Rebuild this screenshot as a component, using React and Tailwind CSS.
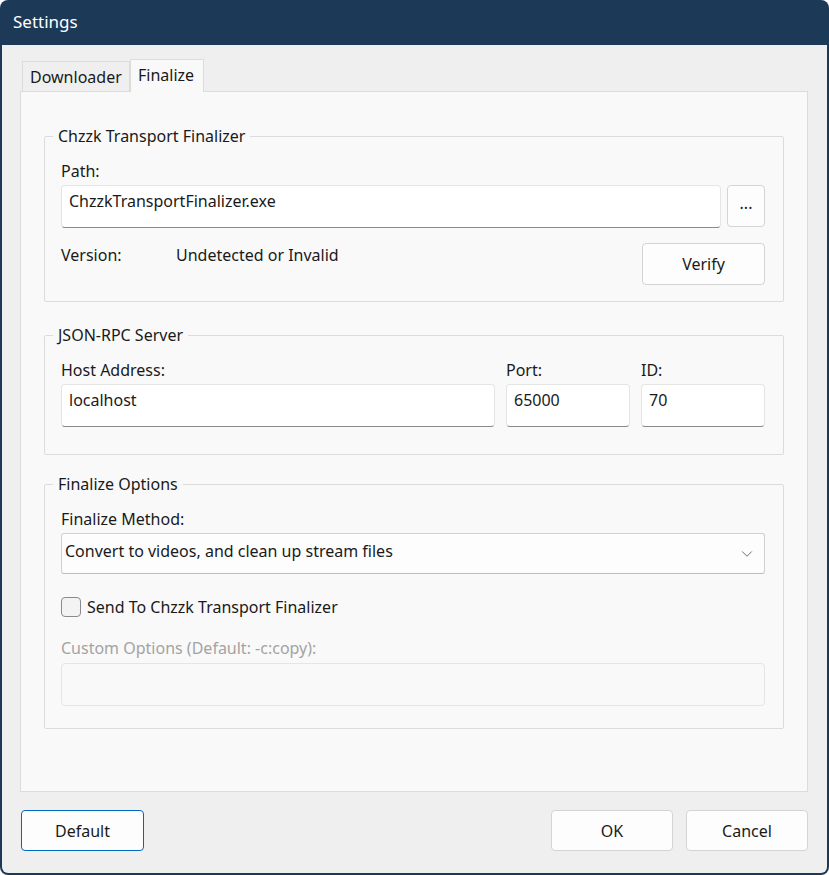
import { ChevronDown } from 'lucide-react';

const FONT = { fontFamily: '"Segoe UI", "Noto Sans", sans-serif' };

function TextBox({ value, className = '', disabled = false }) {
  return (
    <div
      className={`h-[43px] rounded-[4px] border px-[7px] flex items-center ${
        disabled
          ? 'bg-[#f9f9f9] border-[#e5e5e5]'
          : 'bg-white border-[#e5e5e5] border-b-[#8a8a8a]'
      } ${className}`}
    >
      <span className="text-[16px] text-[#1a1a1a] leading-none -mt-[12px]">{value}</span>
    </div>
  );
}

function Button({ children, className = '', primary = false }) {
  return (
    <button
      className={`rounded-[4px] border bg-[#fdfdfd] text-[16px] text-[#1a1a1a] flex items-center justify-center ${
        primary ? 'border-[#0067c0]' : 'border-[#d4d4d4]'
      } ${className}`}
    >
      {children}
    </button>
  );
}

function Group({ title, className = '', children }) {
  return (
    <fieldset className={`border border-[#dcdcdc] rounded-[2px] pl-4 pr-[18px] ${className}`}>
      <legend className="-ml-[8px] px-[5px] text-[16px] leading-[24px] text-[#1a1a1a]">{title}</legend>
      {children}
    </fieldset>
  );
}

export default function App() {
  return (
    <div className="w-[829px] h-[875px] bg-[#1c3a58] rounded-t-[8px] rounded-b-[8px] flex flex-col" style={FONT}>
      {/* Title bar */}
      <div className="h-[45px] shrink-0 flex items-center pl-[13px] pb-[1px]">
        <span className="text-white text-[17px]">Settings</span>
      </div>

      {/* Body */}
      <div className="flex-1 mx-[2px] mb-[2px] bg-[#efefef] rounded-b-[6px] flex flex-col">
        {/* Tabs */}
        <div className="flex items-end pl-[20px] pt-[13px] h-[46px]">
          <div className="h-[30px] w-[108px] pl-[7px] border border-b-0 border-[#dcdcdc] bg-[#efefef] flex items-center text-[16px] text-[#1a1a1a]">
            Downloader
          </div>
          <div className="h-[33px] w-[74px] px-[7px] border border-b-0 border-[#dcdcdc] bg-[#f9f9f9] -mb-px relative z-10 flex items-center text-[16px] text-[#1a1a1a] pb-[2px]">
            Finalize
          </div>
        </div>

        {/* Tab panel */}
        <div className="ml-[18px] mr-[19px] h-[701px] bg-[#f9f9f9] border border-[#dcdcdc] px-[23px] pt-[32px]">
          <Group title="Chzzk Transport Finalizer" className="pb-[16px]">
            <div className="mt-[11px] text-[16px] leading-[24px] text-[#1a1a1a]">Path:</div>
            <div className="flex gap-[6px] mt-[2px]">
              <TextBox value="ChzzkTransportFinalizer.exe" className="w-[660px]" />
              <Button className="w-[38px] h-[42px] pb-[6px]">...</Button>
            </div>
            <div className="flex items-start mt-[15px]">
              <span className="w-[115px] text-[16px] leading-[24px] text-[#1a1a1a]">Version:</span>
              <span className="text-[16px] leading-[24px] text-[#1a1a1a]">Undetected or Invalid</span>
              <Button className="ml-auto w-[123px] h-[42px]">Verify</Button>
            </div>
          </Group>

          <Group title="JSON-RPC Server" className="mt-[21px] pb-[27px]">
            <div className="flex gap-[11px] mt-[11px]">
              <div className="w-[434px]">
                <div className="text-[16px] leading-[24px] text-[#1a1a1a]">Host Address:</div>
                <TextBox value="localhost" className="mt-[2px]" />
              </div>
              <div className="w-[124px]">
                <div className="text-[16px] leading-[24px] text-[#1a1a1a]">Port:</div>
                <TextBox value="65000" className="mt-[2px]" />
              </div>
              <div className="w-[124px]">
                <div className="text-[16px] leading-[24px] text-[#1a1a1a]">ID:</div>
                <TextBox value="70" className="mt-[2px]" />
              </div>
            </div>
          </Group>

          <Group title="Finalize Options" className="mt-[17px] pb-[22px]">
            <div className="mt-[11px] text-[16px] leading-[24px] text-[#1a1a1a]">Finalize Method:</div>
            <div className="mt-[2px] h-[41px] bg-[#fdfdfd] border border-[#d0d0d0] border-b-[#bcbcbc] rounded-[3px] flex items-center pl-[3px] pr-[8px]">
              <span className="text-[16px] text-[#1a1a1a] -mt-[6px]">Convert to videos, and clean up stream files</span>
              <ChevronDown className="ml-auto w-[18px] h-[18px] text-[#5f5f5f]" strokeWidth={1.2} />
            </div>
            <div className="mt-[21px] flex items-center gap-[6px] h-[24px]">
              <div className="w-[20px] h-[20px] rounded-[4px] border border-[#8a8a8a] bg-[#f3f3f3]" />
              <span className="text-[16px] text-[#1a1a1a]">Send To Chzzk Transport Finalizer</span>
            </div>
            <div className="mt-[17px] text-[16px] leading-[24px] text-[#a3a3a3]">Custom Options (Default: -c:copy):</div>
            <TextBox value="" disabled className="mt-[3px]" />
          </Group>
        </div>

        {/* Footer buttons */}
        <div className="flex items-start px-[19px] pt-[18px]">
          <Button primary className="w-[123px] h-[41px]">Default</Button>
          <Button className="ml-auto w-[122px] h-[41px]">OK</Button>
          <Button className="ml-[13px] w-[122px] h-[41px]">Cancel</Button>
        </div>
      </div>
    </div>
  );
}
